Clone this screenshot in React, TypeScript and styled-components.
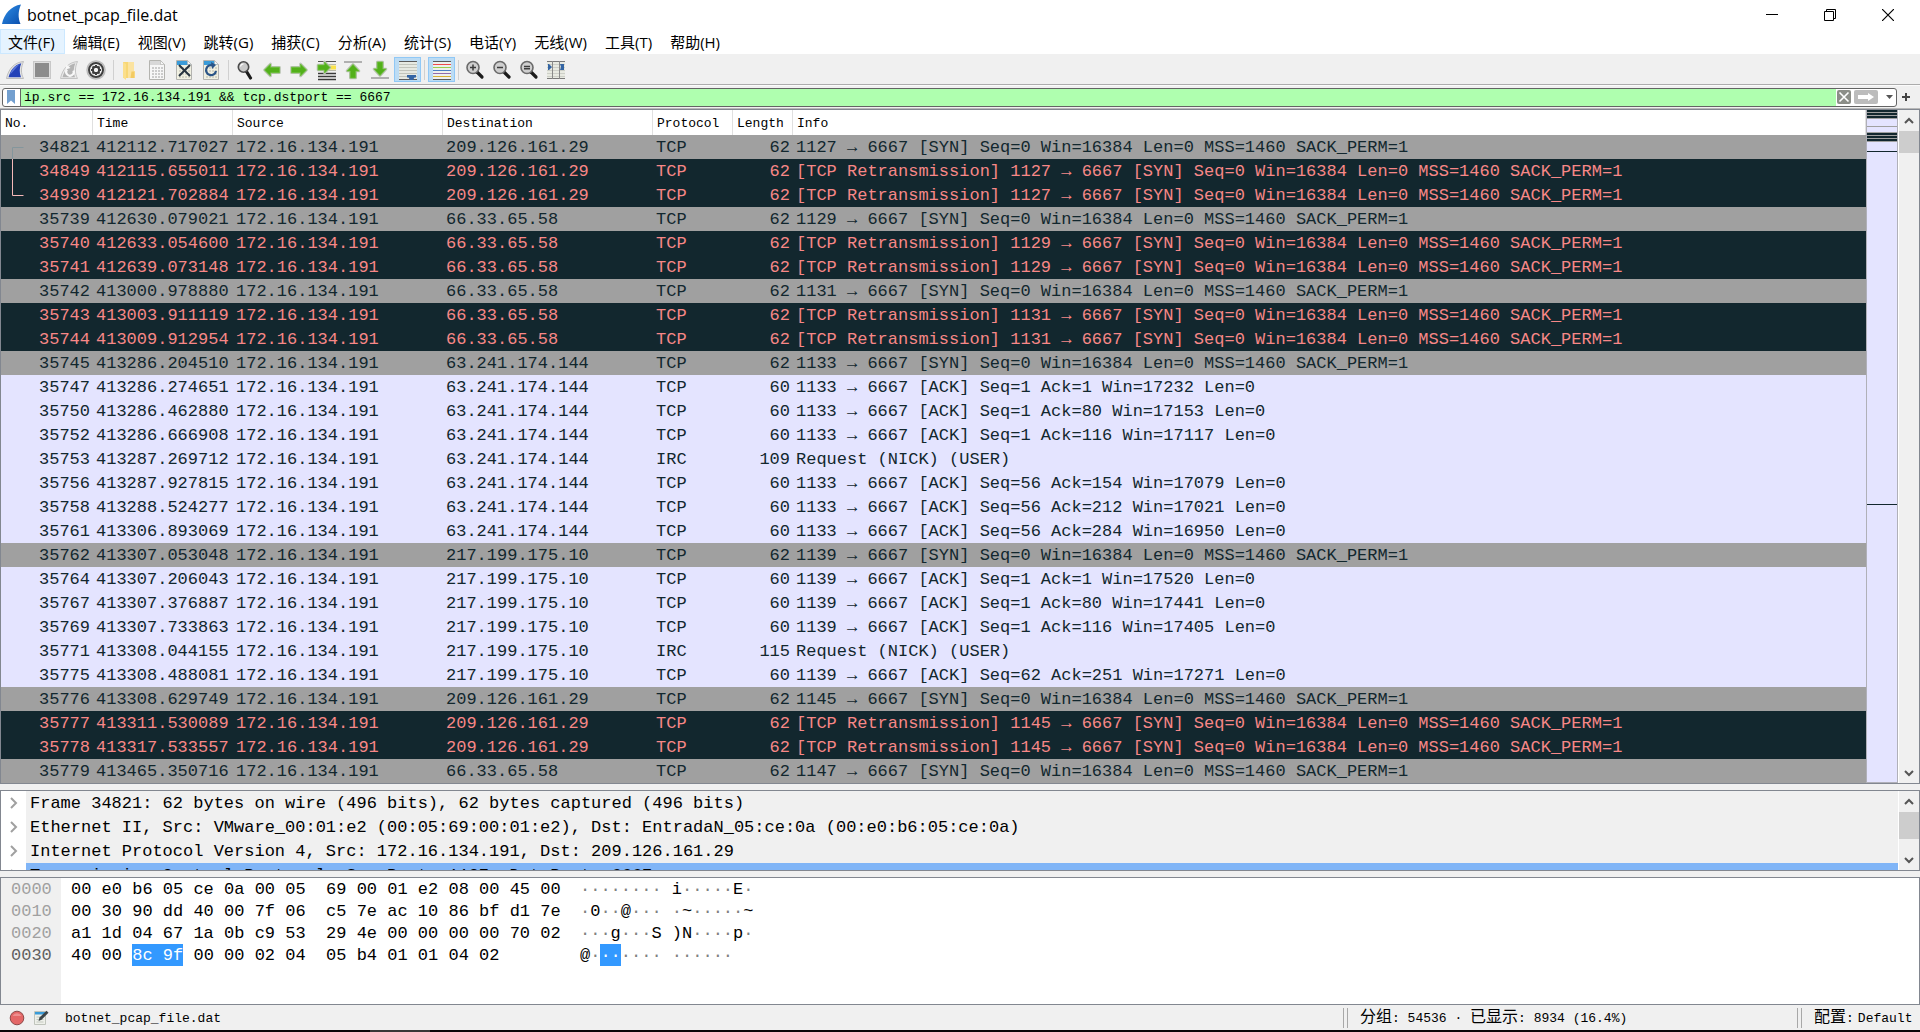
import React, { useEffect, useRef } from 'react';
import styled, { createGlobalStyle, css } from 'styled-components';

const uiFont = `"Open Sans", "Noto Sans CJK SC", sans-serif`;
const monoFont = `"Liberation Mono", "Noto Sans CJK SC", monospace`;

const frameColor = '#828790';
const faceColor = '#f0f0f0';

const GlobalStyle = createGlobalStyle`
  *, *::before, *::after { box-sizing: border-box; }
  body { margin: 0; background: ${faceColor}; color: #000; }
  button, input { font: inherit; color: inherit; margin: 0; }
  button { border: 0; padding: 0; background: none; }
  svg { display: block; flex: none; }
`;

/* ---------- window shell ---------- */

const Window = styled.div`
  display: flex;
  flex-direction: column;
  height: 100vh;
  overflow: hidden;
  background: ${faceColor};
  font-family: ${uiFont};
  font-size: 15px;
`;

const TitleBar = styled.header`
  display: flex;
  align-items: center;
  height: 29px;
  padding: 0 3px 0 2px;
  background: #fff;
`;

const WindowTitle = styled.h1`
  flex: 1;
  margin: 0 0 0 5px;
  font-size: 16px;
  line-height: 28px;
  font-weight: 400;
`;

const CaptionButton = styled.button`
  display: grid;
  place-items: center;
  width: 58px;
  height: 28px;
`;

const MenuBar = styled.nav`
  display: flex;
  height: 27px;
  background: #fff;
  border-bottom: 2px solid ${faceColor};
`;

const MenuItem = styled.button<{ $active?: boolean }>`
  height: 25px;
  padding: 1px 10px 0 8px;
  line-height: 24px;
  white-space: nowrap;
  ${(p) => p.$active && css`
    background: #e5f3ff;
    box-shadow: inset 0 0 0 1px #cce8ff;
  `}
`;

/* ---------- toolbar ---------- */

const ToolBar = styled.div`
  display: flex;
  height: 29px;
  padding: 1px 2px 0;
  border-bottom: 1px solid #acacac;
`;

const ToolButton = styled.button<{ $checked?: boolean }>`
  width: 27px;
  height: 25px;
  ${(p) => p.$checked && css`
    background: #bcdcf4;
    box-shadow: inset 0 0 0 1px #90c8f6;
  `}
`;

const ToolSeparator = styled.span`
  width: 1px;
  height: 20px;
  margin: 3px;
  background: #d0d0d0;
`;

/* ---------- display filter ---------- */

const FilterBar = styled.form`
  display: flex;
  align-items: center;
  height: 24px;
  padding: 0 6px 0 2px;
  border-top: 1px solid #fbfbfb;
  border-bottom: 1px solid #b8b8b8;
`;

const FilterField = styled.div`
  display: flex;
  align-items: stretch;
  flex: 1;
  height: 19px;
  border: 1px solid #646464;
  border-radius: 3px;
  background: #fff;
  overflow: hidden;
`;

const BookmarkButton = styled.button`
  width: 18px;
  border-right: 1px solid #646464;
`;

const FilterInput = styled.input`
  flex: 1;
  min-width: 0;
  height: 17px;
  padding: 0 3px;
  border: 0;
  outline: 0;
  background: #afffaf;
  caret-color: #500050;
  font-family: ${monoFont};
  font-size: 13px;
  line-height: 17px;
`;

const FilterActions = styled.div`
  display: flex;
  align-items: center;
  gap: 3px;
  padding-left: 1px;
`;

const AddButton = styled.button`
  display: grid;
  place-items: center;
  width: 17px;
  height: 20px;
`;

/* ---------- panes ---------- */

const Pane = styled.section<{ $height?: number }>`
  display: flex;
  flex: ${(p) => (p.$height ? `0 0 ${p.$height}px` : '1 1 0')};
  min-height: 0;
  border: 1px solid ${frameColor};
  background: #fff;
  overflow: hidden;
`;

const Splitter = styled.div`
  flex: 0 0 6px;
`;

const ListViewport = styled.div`
  flex: 1;
  min-width: 0;
  overflow: hidden;
`;

const PacketTable = styled.table`
  width: 100%;
  table-layout: fixed;
  border-collapse: separate;
  border-spacing: 0;
  font-family: ${monoFont};
  font-size: 17px;
  line-height: 22px;
`;

const HeadCell = styled.th`
  height: 25px;
  padding: 2px 4px 0;
  border-right: 1px solid #e0e0e0;
  text-align: left;
  font-size: 13px;
  line-height: 23px;
  font-weight: 400;
  white-space: nowrap;
`;

type Kind = 'syn' | 'bad' | 'tcp';

const kindColors: Record<Kind, { back: string; text: string }> = {
  syn: { back: '#a0a0a0', text: '#12272e' },
  bad: { back: '#12272e', text: '#f78787' },
  tcp: { back: '#e4e4ff', text: '#12272e' },
};

const PacketRow = styled.tr<{ $kind: Kind }>`
  height: 24px;
  background: ${(p) => kindColors[p.$kind].back};
  color: ${(p) => kindColors[p.$kind].text};
`;

const Cell = styled.td<{ $end?: boolean }>`
  height: 24px;
  padding: 2px 3px 0;
  text-align: ${(p) => (p.$end ? 'right' : 'left')};
  white-space: nowrap;
  overflow: hidden;
`;

const NumberCell = styled.div`
  display: flex;
  justify-content: flex-end;
  height: 22px;

  svg { margin: -2px auto 0 8px; }
`;

const MiniMap = styled.div`
  display: flex;
  flex-direction: column;
  width: 32px;
  border: solid #b0b0b8;
  border-width: 0 1px 1px;
  background: #e4e4ff;
`;

const Stripe = styled.div<{ $kind: Kind; $size: number }>`
  flex: 0 0 ${(p) => p.$size}px;
  background: ${(p) => kindColors[p.$kind].back};
`;

const ScrollTrack = styled.div`
  display: flex;
  flex-direction: column;
  width: 21px;
  padding-left: 1px;
  background: linear-gradient(to right, #fff 1px, ${faceColor} 1px);
`;

const ScrollButton = styled.button`
  display: grid;
  place-items: center;
  flex: 0 0 21px;
`;

const ScrollThumb = styled.div<{ $size: number }>`
  height: ${(p) => p.$size}px;
  margin-bottom: auto;
  background: #cdcdcd;
`;

/* ---------- packet details ---------- */

const Tree = styled.ul`
  flex: 1;
  min-width: 0;
  margin: 0;
  padding: 0;
  list-style: none;
  overflow: hidden;
  font-family: ${monoFont};
  font-size: 17px;
  line-height: 26px;
`;

const TreeRow = styled.li`
  display: flex;
  height: 24px;
`;

const Expander = styled.button`
  display: grid;
  place-items: center;
  width: 25px;
`;

const TreeText = styled.span<{ $selected?: boolean }>`
  flex: 1;
  min-width: 0;
  padding-left: 4px;
  white-space: nowrap;
  overflow: hidden;
  background: ${(p) => (p.$selected ? '#80b5f7' : faceColor)};
`;

/* ---------- packet bytes ---------- */

const ByteView = styled.div`
  display: flex;
  flex: 1;
  font-family: ${monoFont};
  font-size: 17px;
  line-height: 24px;
  white-space: pre;
`;

const OffsetColumn = styled.div`
  width: 60px;
  padding-left: 10px;
  background: ${faceColor};
`;

const HexColumn = styled.div`
  width: 519px;
  padding-left: 10px;
`;

const AsciiColumn = styled.div`
  flex: 1;
`;

const ByteLine = styled.div`
  height: 22px;
`;

const Offset = styled(ByteLine)<{ $current?: boolean }>`
  color: ${(p) => (p.$current ? '#606060' : '#a0a0a0')};
`;

const Mark = styled.mark`
  display: inline-block;
  height: 22px;
  background: #3399ff;
  color: #fff;
`;

const Dots = styled.span`
  color: #808080;
`;

/* ---------- status bar ---------- */

const StatusBar = styled.footer`
  display: flex;
  align-items: center;
  height: 25px;
  font-family: ${monoFont};
  font-size: 13px;
  line-height: 23px;
  white-space: pre;
`;

const StatusIcons = styled.div`
  display: flex;
  align-items: center;
  gap: 9px;
  width: 65px;
  padding-left: 9px;
`;

const StatusSection = styled.div<{ $width?: number }>`
  display: flex;
  align-items: center;
  height: 25px;
  ${(p) => (p.$width ? `width: ${p.$width}px;` : 'flex: 1;')}
`;

const StatusText = styled.span`
  height: 25px;
  padding-top: 2px;
`;

const Grip = styled.span`
  width: 5px;
  height: 20px;
  margin-right: 12px;
  border: solid #a8a8a8;
  border-width: 0 1px;
`;

const Han = styled.span`
  font-size: 16px;
`;

const ProfileButton = styled.button`
  display: flex;
  gap: 4px;
`;

const DesktopEdge = styled.div`
  height: 2px;
  background: linear-gradient(to right, #0c0408 370px, #3a3638 370px, #3a3638 430px, #0c0408 430px);
`;

/* ---------- drawings ---------- */

const Icon = ({ children }: { children: React.ReactNode }) => (
  <svg width="27" height="25" viewBox="0 0 27 25" fill="none" aria-hidden="true">
    {children}
  </svg>
);

const finPath = 'M4.5 21.5C6.5 12 12 5.5 21.5 4.5C19 10 18.5 16 21.5 21.5Z';
const finCore = 'M6.5 20.3C8.5 13 12.5 7.8 19.3 6.2C17.3 11 17.3 15.5 19 20.3Z';

const StartIcon = () => (
  <Icon>
    <path d={finPath} fill="#e4e4e4" stroke="#bdbdbd" />
    <path d={finCore} fill="#2442b8" />
    <path d="M8 17.5C10 12 13 8.5 18 7C14.500 10 12.500 13 8 17.5Z" fill="#5b76d8" />
  </Icon>
);

const StopIcon = () => (
  <Icon>
    <rect x="4.5" y="4.5" width="17" height="17" fill="#dedede" stroke="#c8c8c8" />
    <rect x="6" y="6" width="14" height="14" fill="#8c8c8c" />
  </Icon>
);

const RestartIcon = () => (
  <Icon>
    <path d={finPath} fill="#eaeaea" stroke="#c4c4c4" />
    <path d={finCore} fill="#b4b4b4" />
    <path d="M11 12.500a3.800 3.800 0 1 0 6.500 1" stroke="#f8f8f8" strokeWidth="2.2" />
    <path d="M9.500 12.500l1-5 4 3.500z" fill="#f8f8f8" />
  </Icon>
);

const OptionsIcon = () => (
  <Icon>
    <circle cx="13" cy="13" r="9" fill="#e6e6e6" stroke="#bcbcbc" strokeWidth="1.5" />
    <circle cx="13" cy="13" r="7" fill="#f4f4f4" stroke="#3e3e3e" strokeWidth="2" />
    <circle cx="13" cy="13" r="3.200" stroke="#3e3e3e" strokeWidth="2" />
    <path d="M13 8v3M13 15v3M8 13h3M15 13h3M9.500 9.500l2 2M14.500 14.500l2 2M16.500 9.500l-2 2M11.500 14.500l-2 2" stroke="#3e3e3e" strokeWidth="2" />
    <circle cx="13" cy="13" r="2" fill="#f4f4f4" />
  </Icon>
);

const FolderIcon = () => (
  <Icon>
    <path d="M6 5h8v16H6z" fill="#f8d775" />
    <path d="M11 5h6v9h1v7h-7z" fill="#fbe3a0" />
    <path d="M6 5l3 2v16l-3-2.500z" fill="#fbdf8c" />
    <path d="M14.500 14.500h3v6.500h-4z" fill="#f3cb62" />
  </Icon>
);

const Paper = ({ head, body, ink }: { head: string; body: string; ink: string }) => (
  <>
    <path d="M5.5 3.500h11l4 4v15h-15z" fill={body} stroke="#b4b4b0" />
    <path d="M6 4h10.500l3.500 4H6z" fill={head} />
    <path d="M16.500 3.500v4h4z" fill="#f6f6f6" stroke="#b4b4b0" strokeWidth=".6" />
    <path d="M8 11h11M8 14h11M8 17h11M8 20h11" stroke={ink} strokeWidth="2" strokeDasharray="2 1" />
  </>
);

const SaveIcon = () => (
  <Icon><Paper head="#d8d8d8" body="#f6f6f6" ink="#cbcbcb" /></Icon>
);

const CloseFileIcon = () => (
  <Icon>
    <Paper head="#3a9bd8" body="#f0f0e2" ink="#d4d4c6" />
    <path d="M8 8l11 11M19 8L8 19" stroke="#26333f" strokeWidth="2" />
  </Icon>
);

const ReloadIcon = () => (
  <Icon>
    <Paper head="#3a9bd8" body="#f0f0e2" ink="#d4d4c6" />
    <path d="M15 8.500a5 5 0 1 0 3 5.500" stroke="#2b5587" strokeWidth="2.2" />
    <path d="M13 5l5 3-4 4z" fill="#2b5587" />
  </Icon>
);

const FindIcon = () => (
  <Icon>
    <path d="M14.500 14.500l4 6.500" stroke="#1c1c1c" strokeWidth="3.2" strokeLinecap="round" />
    <circle cx="11.500" cy="10" r="5.200" fill="#c9c9c9" stroke="#4c4c4c" strokeWidth="1.6" />
    <path d="M8.500 9.500a3 3 0 0 1 3-2.500" stroke="#fff" strokeWidth="1.2" />
  </Icon>
);

const Arrow = ({ d }: { d: string }) => (
  <>
    <path d={d} stroke="#b9c4b2" strokeWidth="2.6" strokeLinejoin="round" />
    <path d={d} fill="#52b01a" stroke="#6cc038" strokeWidth=".8" strokeLinejoin="round" />
  </>
);

const BackIcon = () => <Icon><Arrow d="M5.5 13l6-6v3.300h9v5.400h-9V19z" /></Icon>;
const ForwardIcon = () => <Icon><Arrow d="M20.5 13l-6-6v3.300h-9v5.400h9V19z" /></Icon>;

const GoToIcon = () => (
  <Icon>
    <path d="M5 4.5h18" stroke="#55554f" />
    <path d="M5 7.5h18M5 13.500h18" stroke="#b8b8a8" />
    <path d="M16 10.500h7" stroke="#fbe34a" strokeWidth="4" />
    <path d="M5 16.500h18M5 19.500h18M5 22.500h18" stroke="#3a3a3a" strokeWidth="1.5" />
    <Arrow d="M17 10.500l-5.500-5.500v3H5v5h6.500v3z" />
  </Icon>
);

const FirstIcon = () => (
  <Icon>
    <rect x="4" y="4" width="18" height="2" fill="#b0b0b0" />
    <Arrow d="M13 7.500l6 6.500h-3.300v7h-5.400v-7H7z" />
  </Icon>
);

const LastIcon = () => (
  <Icon>
    <rect x="4" y="20" width="18" height="2" fill="#b0b0b0" />
    <Arrow d="M13 18.500l6-6.500h-3.300V5h-5.400v7H7z" />
  </Icon>
);

const AutoScrollIcon = () => (
  <Icon>
    <rect x="5" y="4" width="18" height="19" fill="#e6e9e2" />
    <path d="M5 7.5h18M5 10.500h18M5 13.500h18M5 16.500h18M5 19.500h18" stroke="#c2c5bc" />
    <path d="M5 4.5h18M5 22.500h18" stroke="#5a5a5a" />
    <path d="M13 18h9v2.500h-1.500L19 23h-3l-1.500-2.500H13z" fill="#3465a4" />
  </Icon>
);

const ColorizeIcon = () => (
  <Icon>
    <rect x="5" y="4" width="18" height="19" fill="#eef0ee" />
    <path d="M5 4.5h18M5 22.500h18" stroke="#5a5a5a" />
    <path d="M5 7.5h18" stroke="#ef4b4b" />
    <path d="M5 10.500h18" stroke="#9ad04e" />
    <path d="M5 13.500h18" stroke="#4c7fc4" />
    <path d="M5 16.500h18" stroke="#8f6bab" />
    <path d="M5 19.500h18" stroke="#d8b034" />
  </Icon>
);

const Lens = ({ children }: { children: React.ReactNode }) => (
  <Icon>
    <path d="M15 15l5 5" stroke="#1c1c1c" strokeWidth="3.2" strokeLinecap="round" />
    <circle cx="11" cy="10.500" r="6" fill="#cfcfcf" stroke="#6a6a6a" strokeWidth="1.6" />
    {children}
  </Icon>
);

const ZoomInIcon = () => <Lens><path d="M8 10.500h6M11 7.500v6" stroke="#3c3c3c" strokeWidth="1.5" /></Lens>;
const ZoomOutIcon = () => <Lens><path d="M8 10.500h6" stroke="#3c3c3c" strokeWidth="1.5" /></Lens>;
const ZoomResetIcon = () => <Lens><path d="M8 9.500h6M8 11.700h6" stroke="#3c3c3c" strokeWidth="1.5" /></Lens>;

const ResizeIcon = () => (
  <Icon>
    <rect x="4" y="4" width="18" height="18" fill="#e8eae2" />
    <path d="M4 7.5h18M4 10.500h18M4 13.500h18M4 16.500h18M4 19.500h18" stroke="#cdcfc8" />
    <path d="M4 4.5h18M4 21.500h18" stroke="#7a7a7a" />
    <path d="M9.500 4v18M16.500 4v18" stroke="#8a8a8a" />
    <path d="M5 7h1l3 3-3 3H5zM21 7h-4l1 3-1 3h4z" fill="#3465a4" />
  </Icon>
);

const AppIcon = () => (
  <svg width="20" height="21" viewBox="0 0 20 21" aria-hidden="true">
    <defs>
      <linearGradient id="fin" x1="0" y1="0" x2="1" y2="1">
        <stop offset="0" stopColor="#2f8fe6" />
        <stop offset="1" stopColor="#0a4fae" />
      </linearGradient>
    </defs>
    <path d="M0 20C2 10 9 2 19 .5C16 7 16 14 18.5 20Z" fill="url(#fin)" />
  </svg>
);

const Chevron = ({ up }: { up?: boolean }) => (
  <svg width="10" height="8" viewBox="0 0 10 8" fill="none" aria-hidden="true">
    <path d={up ? 'M1 6l4-4 4 4' : 'M1 2l4 4 4-4'} stroke="#555" strokeWidth="2" />
  </svg>
);

const ExpertIcon = () => (
  <svg width="16" height="16" viewBox="0 0 16 16" aria-hidden="true">
    <circle cx="8" cy="8" r="6.800" fill="#e46767" stroke="#8c4a4a" />
    <path d="M3.500 6a5 5 0 0 1 9 0z" fill="#ee9090" />
  </svg>
);

const CommentIcon = () => (
  <svg width="15" height="15" viewBox="0 0 15 15" aria-hidden="true">
    <path d="M.5 1.500h11v13H.5z" fill="#eef0ea" stroke="#c0c4bc" />
    <path d="M1 2h10v2.500H1z" fill="#3a9bd8" />
    <path d="M2.500 7h7M2.500 9.500h7M2.500 12h7" stroke="#c4c8c0" />
    <path d="M4.500 11l1-3.500L12.500.8l2 2L7.500 9.800z" fill="#3c4448" />
  </svg>
);

/* ---------- content ---------- */

const menus = ['文件(F)', '编辑(E)', '视图(V)', '跳转(G)', '捕获(C)', '分析(A)', '统计(S)', '电话(Y)', '无线(W)', '工具(T)', '帮助(H)'];

type Tool = { label: string; icon: () => React.ReactElement; checked?: boolean };

const toolGroups: Tool[][] = [
  [
    { label: '开始捕获', icon: StartIcon },
    { label: '停止捕获', icon: StopIcon },
    { label: '重新开始捕获', icon: RestartIcon },
    { label: '捕获选项', icon: OptionsIcon },
  ],
  [
    { label: '打开', icon: FolderIcon },
    { label: '保存', icon: SaveIcon },
    { label: '关闭', icon: CloseFileIcon },
    { label: '重新加载', icon: ReloadIcon },
  ],
  [
    { label: '查找分组', icon: FindIcon },
    { label: '后退', icon: BackIcon },
    { label: '前进', icon: ForwardIcon },
    { label: '转到分组', icon: GoToIcon },
    { label: '首个分组', icon: FirstIcon },
    { label: '最新分组', icon: LastIcon },
    { label: '自动滚动', icon: AutoScrollIcon, checked: true },
  ],
  [{ label: '着色', icon: ColorizeIcon, checked: true }],
  [
    { label: '放大', icon: ZoomInIcon },
    { label: '缩小', icon: ZoomOutIcon },
    { label: '普通大小', icon: ZoomResetIcon },
    { label: '调整列宽', icon: ResizeIcon },
  ],
];

const columns: { name: string; width?: number }[] = [
  { name: 'No.', width: 92 },
  { name: 'Time', width: 140 },
  { name: 'Source', width: 210 },
  { name: 'Destination', width: 210 },
  { name: 'Protocol', width: 80 },
  { name: 'Length', width: 60 },
  { name: 'Info' },
];

type Packet = {
  no: number;
  time: string;
  dst: string;
  kind: Kind;
  len: number;
  info: string;
  proto?: string;
};

const syn = (no: number, time: string, dst: string, port: number): Packet => ({
  no, time, dst, kind: 'syn', len: 62,
  info: `${port} → 6667 [SYN] Seq=0 Win=16384 Len=0 MSS=1460 SACK_PERM=1`,
});
const retry = (no: number, time: string, dst: string, port: number): Packet => ({
  ...syn(no, time, dst, port),
  kind: 'bad',
  info: `[TCP Retransmission] ${port} → 6667 [SYN] Seq=0 Win=16384 Len=0 MSS=1460 SACK_PERM=1`,
});
const ack = (no: number, time: string, dst: string, port: number, seq: number, ackNo: number, win: number): Packet => ({
  no, time, dst, kind: 'tcp', len: 60,
  info: `${port} → 6667 [ACK] Seq=${seq} Ack=${ackNo} Win=${win} Len=0`,
});
const irc = (no: number, time: string, dst: string, len: number): Packet => ({
  no, time, dst, kind: 'tcp', len, proto: 'IRC', info: 'Request (NICK) (USER)',
});

const hostA = '209.126.161.29';
const hostB = '66.33.65.58';
const hostC = '63.241.174.144';
const hostD = '217.199.175.10';

const packets: Packet[] = [
  syn(34821, '412112.717027', hostA, 1127),
  retry(34849, '412115.655011', hostA, 1127),
  retry(34930, '412121.702884', hostA, 1127),
  syn(35739, '412630.079021', hostB, 1129),
  retry(35740, '412633.054600', hostB, 1129),
  retry(35741, '412639.073148', hostB, 1129),
  syn(35742, '413000.978880', hostB, 1131),
  retry(35743, '413003.911119', hostB, 1131),
  retry(35744, '413009.912954', hostB, 1131),
  syn(35745, '413286.204510', hostC, 1133),
  ack(35747, '413286.274651', hostC, 1133, 1, 1, 17232),
  ack(35750, '413286.462880', hostC, 1133, 1, 80, 17153),
  ack(35752, '413286.666908', hostC, 1133, 1, 116, 17117),
  irc(35753, '413287.269712', hostC, 109),
  ack(35756, '413287.927815', hostC, 1133, 56, 154, 17079),
  ack(35758, '413288.524277', hostC, 1133, 56, 212, 17021),
  ack(35761, '413306.893069', hostC, 1133, 56, 284, 16950),
  syn(35762, '413307.053048', hostD, 1139),
  ack(35764, '413307.206043', hostD, 1139, 1, 1, 17520),
  ack(35767, '413307.376887', hostD, 1139, 1, 80, 17441),
  ack(35769, '413307.733863', hostD, 1139, 1, 116, 17405),
  irc(35771, '413308.044155', hostD, 115),
  ack(35775, '413308.488081', hostD, 1139, 62, 251, 17271),
  syn(35776, '413308.629749', hostA, 1145),
  retry(35777, '413311.530089', hostA, 1145),
  retry(35778, '413317.533557', hostA, 1145),
  syn(35779, '413465.350716', hostB, 1147),
];

/* Conversation bracket beside the related packets. */
const brackets = [
  { d: 'M11.5 12.5H.5V24', color: '#84969c' },
  { d: 'M.5 0V24', color: '#f5b9b9' },
  { d: 'M.5 0V12.5H11.5', color: '#f5b9b9' },
];

const stripes: [Kind, number][] = [
  ['bad', 2], ['syn', 1], ['bad', 2], ['syn', 1], ['bad', 2], ['syn', 1],
  ['tcp', 7], ['syn', 1], ['tcp', 5], ['syn', 1],
  ['bad', 2], ['syn', 1], ['bad', 2], ['syn', 1], ['bad', 2], ['syn', 1],
  ['tcp', 9], ['bad', 1], ['tcp', 352], ['bad', 1],
];

const details = [
  'Frame 34821: 62 bytes on wire (496 bits), 62 bytes captured (496 bits)',
  'Ethernet II, Src: VMware_00:01:e2 (00:05:69:00:01:e2), Dst: EntradaN_05:ce:0a (00:e0:b6:05:ce:0a)',
  'Internet Protocol Version 4, Src: 172.16.134.191, Dst: 209.126.161.29',
  'Transmission Control Protocol, Src Port: 1127, Dst Port: 6667',
];

const bytes = [
  { offset: '0000', hex: ['00 e0 b6 05 ce 0a 00 05  69 00 01 e2 08 00 45 00'], text: ['········ i·····E·'] },
  { offset: '0010', hex: ['00 30 90 dd 40 00 7f 06  c5 7e ac 10 86 bf d1 7e'], text: ['·0··@··· ·~·····~'] },
  { offset: '0020', hex: ['a1 1d 04 67 1a 0b c9 53  29 4e 00 00 00 00 70 02'], text: ['···g···S )N····p·'] },
  { offset: '0030', hex: ['40 00 ', '8c 9f', ' 00 00 02 04  05 b4 01 01 04 02'], text: ['@·', '··', '···· ······'] },
];

/* Unprintable bytes are shown as muted dots. */
const Printable = ({ text }: { text: string }) => (
  <>
    {text.split(/(·+)/).map((run, i) => (run.startsWith('·') ? <Dots key={i}>{run}</Dots> : run))}
  </>
);

const ScrollBar = ({ thumb }: { thumb: number }) => (
  <ScrollTrack>
    <ScrollButton type="button" aria-label="向上滚动"><Chevron up /></ScrollButton>
    <ScrollThumb $size={thumb} />
    <ScrollButton type="button" aria-label="向下滚动"><Chevron /></ScrollButton>
  </ScrollTrack>
);

export default function App() {
  const filterRef = useRef<HTMLInputElement>(null);

  /* The filter is being edited: put the caret after its last character. */
  useEffect(() => {
    const field = filterRef.current;
    if (!field) return;
    field.focus();
    field.setSelectionRange(field.value.length, field.value.length);
  }, []);

  return (
    <Window>
      <GlobalStyle />
      <TitleBar>
        <AppIcon />
        <WindowTitle>botnet_pcap_file.dat</WindowTitle>
        <CaptionButton type="button" aria-label="最小化">
          <svg width="12" height="12" viewBox="0 0 12 12"><path d="M0 5.500h12" stroke="#000" /></svg>
        </CaptionButton>
        <CaptionButton type="button" aria-label="还原">
          <svg width="12" height="12" viewBox="0 0 12 12" fill="none">
            <path d="M.5 2.500h9v9h-9zM2.500 2.500v-2h9v9h-2" stroke="#000" />
          </svg>
        </CaptionButton>
        <CaptionButton type="button" aria-label="关闭窗口">
          <svg width="12" height="12" viewBox="0 0 12 12"><path d="M0 0l12 12M12 0L0 12" stroke="#000" strokeWidth="1.2" /></svg>
        </CaptionButton>
      </TitleBar>

      <MenuBar>
        {menus.map((name, i) => (
          <MenuItem key={name} type="button" $active={i === 0}>{name}</MenuItem>
        ))}
      </MenuBar>

      <ToolBar role="toolbar">
        {toolGroups.map((group, g) => (
          <React.Fragment key={g}>
            {g > 0 && <ToolSeparator />}
            {group.map(({ label, icon: Glyph, checked }) => (
              <ToolButton key={label} type="button" aria-label={label} $checked={checked}>
                <Glyph />
              </ToolButton>
            ))}
          </React.Fragment>
        ))}
      </ToolBar>

      <FilterBar onSubmit={(e) => e.preventDefault()}>
        <FilterField>
          <BookmarkButton type="button" aria-label="过滤器书签">
            <svg width="17" height="17" viewBox="0 0 17 17"><path d="M4 1h8v14l-4-3.500L4 15z" fill="#729fcf" /></svg>
          </BookmarkButton>
          <FilterInput
            ref={filterRef}
            aria-label="显示过滤器"
            spellCheck={false}
            defaultValue="ip.src == 172.16.134.191 && tcp.dstport == 6667"
          />
          <FilterActions>
            <button type="button" aria-label="清除">
              <svg width="14" height="14" viewBox="0 0 14 14">
                <rect width="14" height="14" rx="2" fill="#8c8e88" />
                <path d="M2.500 2.500l9 9M11.500 2.500l-9 9" stroke="#fff" strokeWidth="1.6" />
              </svg>
            </button>
            <button type="submit" aria-label="应用">
              <svg width="24" height="14" viewBox="0 0 24 14">
                <rect width="24" height="14" rx="2" fill="#bcbcbc" />
                <path d="M4 5h10V3l6 4-6 4V9H4z" fill="#fff" />
              </svg>
            </button>
            <button type="button" aria-label="历史">
              <svg width="15" height="14" viewBox="0 0 15 14"><path d="M5 5h7l-3.500 4z" fill="#555" /></svg>
            </button>
          </FilterActions>
        </FilterField>
        <AddButton type="button" aria-label="添加过滤器按钮">
          <svg width="8" height="8" viewBox="0 0 8 8"><path d="M4 0v8M0 4h8" stroke="#444" strokeWidth="2" /></svg>
        </AddButton>
      </FilterBar>

      <Pane>
        <ListViewport>
          <PacketTable>
            <colgroup>
              {columns.map((c) => <col key={c.name} width={c.width} />)}
            </colgroup>
            <thead>
              <tr>{columns.map((c) => <HeadCell key={c.name} scope="col">{c.name}</HeadCell>)}</tr>
            </thead>
            <tbody>
              {packets.map((p, i) => (
                <PacketRow key={p.no} $kind={p.kind}>
                  <Cell>
                    <NumberCell>
                      {brackets[i] && (
                        <svg width="12" height="24" viewBox="0 0 12 24" fill="none" aria-hidden="true">
                          <path d={brackets[i].d} stroke={brackets[i].color} />
                        </svg>
                      )}
                      {p.no}
                    </NumberCell>
                  </Cell>
                  <Cell>{p.time}</Cell>
                  <Cell>172.16.134.191</Cell>
                  <Cell>{p.dst}</Cell>
                  <Cell>{p.proto ?? 'TCP'}</Cell>
                  <Cell $end>{p.len}</Cell>
                  <Cell>{p.info}</Cell>
                </PacketRow>
              ))}
            </tbody>
          </PacketTable>
        </ListViewport>
        <MiniMap>
          {stripes.map(([kind, size], i) => <Stripe key={i} $kind={kind} $size={size} />)}
        </MiniMap>
        <ScrollBar thumb={22} />
      </Pane>
      <Splitter />

      <Pane $height={81}>
        <Tree>
          {details.map((line, i) => (
            <TreeRow key={line}>
              <Expander type="button" aria-label="展开">
                <svg width="8" height="12" viewBox="0 0 8 12" fill="none"><path d="M1 1l5 5-5 5" stroke="#a0a0a0" strokeWidth="2" /></svg>
              </Expander>
              <TreeText $selected={i === 3}>{line}</TreeText>
            </TreeRow>
          ))}
        </Tree>
        <ScrollBar thumb={27} />
      </Pane>
      <Splitter />

      <Pane $height={128}>
        <ByteView>
          <OffsetColumn>
            {bytes.map((b, i) => <Offset key={b.offset} $current={i === 3}>{b.offset}</Offset>)}
          </OffsetColumn>
          <HexColumn>
            {bytes.map((b) => (
              <ByteLine key={b.offset}>{b.hex.map((part, i) => (i === 1 ? <Mark key={i}>{part}</Mark> : part))}</ByteLine>
            ))}
          </HexColumn>
          <AsciiColumn>
            {bytes.map((b) => (
              <ByteLine key={b.offset}>
                {b.text.map((part, i) => (i === 1 ? <Mark key={i}>{part}</Mark> : <Printable key={i} text={part} />))}
              </ByteLine>
            ))}
          </AsciiColumn>
        </ByteView>
      </Pane>

      <StatusBar>
        <StatusIcons>
          <ExpertIcon />
          <CommentIcon />
        </StatusIcons>
        <StatusSection><StatusText>botnet_pcap_file.dat</StatusText></StatusSection>
        <StatusSection $width={454}>
          <Grip />
          <StatusText><Han>分组</Han>: 54536 · <Han>已显示</Han>: 8934 (16.4%)</StatusText>
        </StatusSection>
        <StatusSection $width={123}>
          <Grip />
          <ProfileButton type="button">
            <StatusText><Han>配置</Han>:</StatusText>
            <StatusText>Default</StatusText>
          </ProfileButton>
        </StatusSection>
      </StatusBar>
      <DesktopEdge />
    </Window>
  );
}
